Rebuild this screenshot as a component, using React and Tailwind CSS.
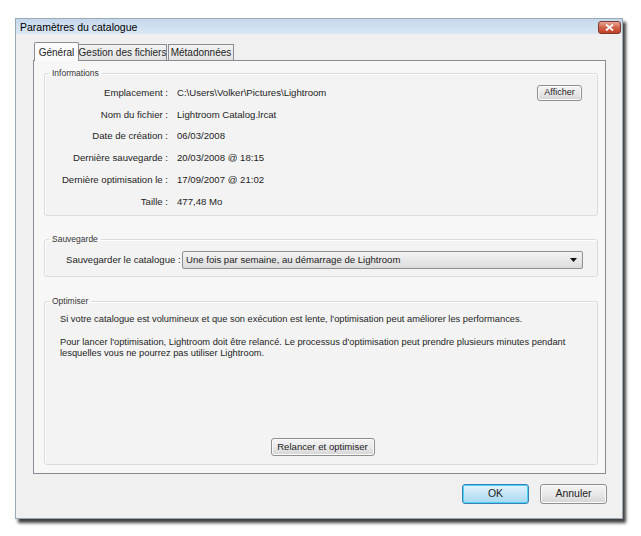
const infoRows = [
  { label: "Emplacement :", value: "C:\\Users\\Volker\\Pictures\\Lightroom", action: "Afficher" },
  { label: "Nom du fichier :", value: "Lightroom Catalog.lrcat" },
  { label: "Date de création :", value: "06/03/2008" },
  { label: "Dernière sauvegarde :", value: "20/03/2008 @ 18:15" },
  { label: "Dernière optimisation le :", value: "17/09/2007 @ 21:02" },
  { label: "Taille :", value: "477,48 Mo" },
];

const tabs = ["Général", "Gestion des fichiers", "Métadonnées"];

function GroupBox({ title, className, children }) {
  return (
    <fieldset
      className={`ml-[10px] mr-[7px] rounded-[3px] border border-[#dcdcdc] bg-[#f3f3f3] shadow-[inset_1px_1px_0_#ffffff] ${className}`}
    >
      <legend className="ml-[4px] px-[3px] text-[8.5px] leading-[10px] text-[#333]">{title}</legend>
      {children}
    </fieldset>
  );
}

function AeroButton({ children, className }) {
  return (
    <button
      className={`whitespace-nowrap rounded-[3px] border border-[#8e8f8f] bg-gradient-to-b from-[#f4f4f4] via-[#e9e9e9] to-[#d5d5d5] text-[#1e1e1e] shadow-[inset_0_0_0_1px_#fbfbfb] ${className}`}
      type="button"
    >
      {children}
    </button>
  );
}

export default function App() {
  return (
    <div className="h-[536px] w-[641px] overflow-hidden bg-white pl-[15px] pt-[18px] font-['Liberation_Sans',Arial,sans-serif] text-[9.6px] text-[#1e1e1e]">
      <div className="flex h-[501px] w-[608px] flex-col border border-[#9aa7b4] bg-[#f0f0f0] shadow-[3px_4px_3px_rgba(0,0,0,0.75)]">
        {/* title bar */}
        <div className="flex h-[15px] items-center justify-between bg-gradient-to-b from-[#c4d8ec] to-[#dbe7f4] pl-[4px] pr-[1px]">
          <span className="mt-[2px] text-[10.5px] leading-none text-black">Paramètres du catalogue</span>
          <span className="mt-[2px] flex h-[13px] w-[23px] items-center justify-center rounded-[3px] border border-[#7a3a2e] bg-gradient-to-b from-[#e8a597] via-[#d2614a] to-[#c23f23]">
            <svg width="9" height="7" viewBox="0 0 9 7">
              <path d="M1 0.5 L8 6.5 M8 0.5 L1 6.5" stroke="white" strokeWidth="1.8" />
            </svg>
          </span>
        </div>

        <div className="flex flex-1 flex-col px-[17px] pt-[8px]">
          {/* tabs */}
          <div className="relative z-10 flex h-[18px] items-end pl-[1px]">
            {tabs.map((tab, i) =>
              i === 0 ? (
                <div
                  className="-mb-px flex h-[19px] w-[45px] items-center justify-center whitespace-nowrap rounded-t-[2px] border border-b-0 border-[#898c95] bg-[#fbfbfb] text-[10px]"
                  key={tab}
                >
                  {tab}
                </div>
              ) : (
                <div
                  className={`flex h-[16px] items-center justify-center whitespace-nowrap border border-b-0 border-[#898c95] bg-gradient-to-b from-[#f2f2f2] to-[#e3e3e3] text-[10px] ${i === 1 ? "w-[88px] border-l-0" : "ml-px w-[66px]"}`}
                  key={tab}
                >
                  {tab}
                </div>
              )
            )}
          </div>

          {/* panel */}
          <div className="flex h-[414px] w-[573px] flex-col border border-[#898c95] bg-[#f7f7f7] pt-[7px]">
            <GroupBox title="Informations" className="h-[148px] pb-[8px]">
              <div className="flex flex-col pt-[4px]">
                {infoRows.map(({ label, value, action }) => (
                  <div className="flex h-[21.8px] items-center" key={label}>
                    <span className="w-[123px] whitespace-nowrap text-right">{label}</span>
                    <span className="ml-[9px] flex-1 whitespace-nowrap">{value}</span>
                    {action && (
                      <AeroButton className="mr-[15px] h-[16px] w-[45px] text-[9px] leading-none">{action}</AeroButton>
                    )}
                  </div>
                ))}
              </div>
            </GroupBox>

            <GroupBox title="Sauvegarde" className="mt-[18px] h-[43px]">
              <div className="flex items-center pt-[7px]">
                <span className="ml-[21px] w-[116px] whitespace-nowrap text-[9.6px]">Sauvegarder le catalogue :</span>
                <div className="flex h-[18px] w-[401px] items-center justify-between rounded-[2px] border border-[#8e8f8f] bg-gradient-to-b from-[#f3f3f3] to-[#dcdcdc] pl-[3px] pr-[5px]">
                  <span className="whitespace-nowrap">Une fois par semaine, au démarrage de Lightroom</span>
                  <svg width="7" height="4" viewBox="0 0 7 4">
                    <path d="M0 0 H7 L3.5 4 Z" fill="#111" />
                  </svg>
                </div>
              </div>
            </GroupBox>

            <GroupBox title="Optimiser" className="mt-[19px] h-[169px]">
              <div className="flex h-[157px] flex-col px-[15px] pt-[8px] text-[9.3px] leading-[11px]">
                <p className="whitespace-nowrap">
                  Si votre catalogue est volumineux et que son exécution est lente, l'optimisation peut améliorer les
                  performances.
                </p>
                <p className="mt-[12px] whitespace-nowrap">
                  Pour lancer l'optimisation, Lightroom doit être relancé. Le processus d'optimisation peut prendre
                  plusieurs minutes pendant
                  <br />
                  lesquelles vous ne pourrez pas utiliser Lightroom.
                </p>
                <div className="mt-auto flex justify-center pb-[7px] pl-[3px]">
                  <AeroButton className="h-[18px] w-[104px] text-[9.6px] leading-none">Relancer et optimiser</AeroButton>
                </div>
              </div>
            </GroupBox>
          </div>

          {/* footer buttons */}
          <div className="-mr-[2px] mt-[10px] flex justify-end gap-[11px]">
            <button
              className="h-[20px] w-[67px] rounded-[3px] border border-[#3c7fb1] bg-gradient-to-b from-[#e5f4fc] via-[#c4e5f6] to-[#a9d9f1] text-[10.5px] shadow-[inset_0_0_0_1px_#48d4f8]"
              type="button"
            >
              OK
            </button>
            <AeroButton className="h-[20px] w-[67px] text-[10.5px]">Annuler</AeroButton>
          </div>
        </div>
      </div>
    </div>
  );
}
